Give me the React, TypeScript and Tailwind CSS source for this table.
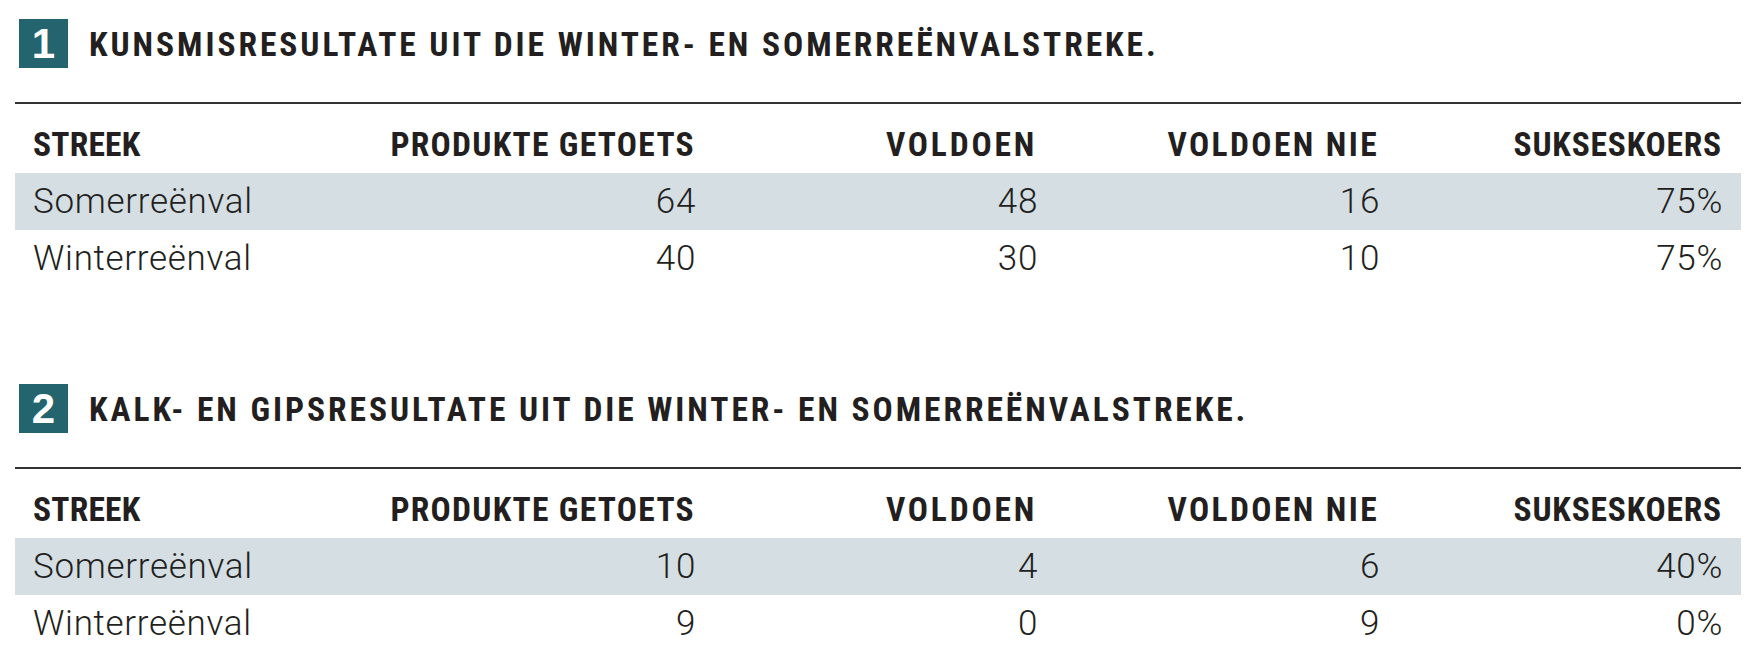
import React from "react";

type Section = {
  n: string;
  title: string;
  rows: string[][];
};

const sections: Section[] = [
  {
    n: "1",
    title: "KUNSMISRESULTATE UIT DIE WINTER- EN SOMERREËNVALSTREKE.",
    rows: [
      ["Somerreënval", "64", "48", "16", "75%"],
      ["Winterreënval", "40", "30", "10", "75%"],
    ],
  },
  {
    n: "2",
    title: "KALK- EN GIPSRESULTATE UIT DIE WINTER- EN SOMERREËNVALSTREKE.",
    rows: [
      ["Somerreënval", "10", "4", "6", "40%"],
      ["Winterreënval", "9", "0", "9", "0%"],
    ],
  },
];

const headers = ["STREEK", "PRODUKTE GETOETS", "VOLDOEN", "VOLDOEN NIE", "SUKSESKOERS"];
const headerTracking = [
  "tracking-[0.2px]",
  "tracking-[1.3px]",
  "tracking-[2.8px]",
  "tracking-[2.4px]",
  "tracking-[0.8px]",
];

const boldFont = "font-['Liberation_Sans_Narrow','Roboto_Condensed','Liberation_Sans',sans-serif]";

function Table({ s, first }: { s: Section; first: boolean }) {
  return (
    <section className={first ? "" : "mt-[97px]"}>
      <div className="flex items-center ml-[4px]">
        <div className="w-[49px] h-[49px] bg-[#23646e] flex items-center justify-center">
          <span className="text-white font-bold text-[42px] leading-none font-['Liberation_Sans',sans-serif]">
            {s.n}
          </span>
        </div>
        <h2
          className={`${boldFont} ml-[21px] mt-[3px] font-bold text-[33.5px] leading-none tracking-[2.95px] text-[#231f20]`}
        >
          {s.title}
        </h2>
      </div>
      <div className="mt-[34px] border-t-2 border-[#333333]" />
      <div className="grid grid-cols-[357px_342px_342px_342px_343px] h-[69px] items-end pb-[12px]">
        {headers.map((h, i) => (
          <div
            key={h}
            className={`${boldFont} font-bold text-[33.5px] leading-none ${headerTracking[i]} text-[#231f20] ${
              i === 0 ? "pl-[18px]" : "text-right pr-[19px]"
            }`}
          >
            {h}
          </div>
        ))}
      </div>
      {s.rows.map((r, ri) => (
        <div
          key={ri}
          className={`grid grid-cols-[357px_342px_342px_342px_343px] h-[57px] items-center ${
            ri === 0 ? "bg-[#d4dee3]" : ""
          }`}
        >
          {r.map((c, i) => (
            <div
              key={i}
              className={`font-['Roboto','Liberation_Sans',sans-serif] font-light text-[35px] leading-none tracking-[0.7px] text-[#231f20] ${
                i === 0 ? "pl-[18px]" : "text-right pr-[18px]"
              }`}
            >
              {c}
            </div>
          ))}
        </div>
      ))}
    </section>
  );
}

export default function App() {
  return (
    <div className="w-[1757px] h-[663px] bg-white pl-[15px] pr-[16px] pt-[19px] overflow-hidden">
      {sections.map((s, i) => (
        <Table key={s.n} s={s} first={i === 0} />
      ))}
    </div>
  );
}
